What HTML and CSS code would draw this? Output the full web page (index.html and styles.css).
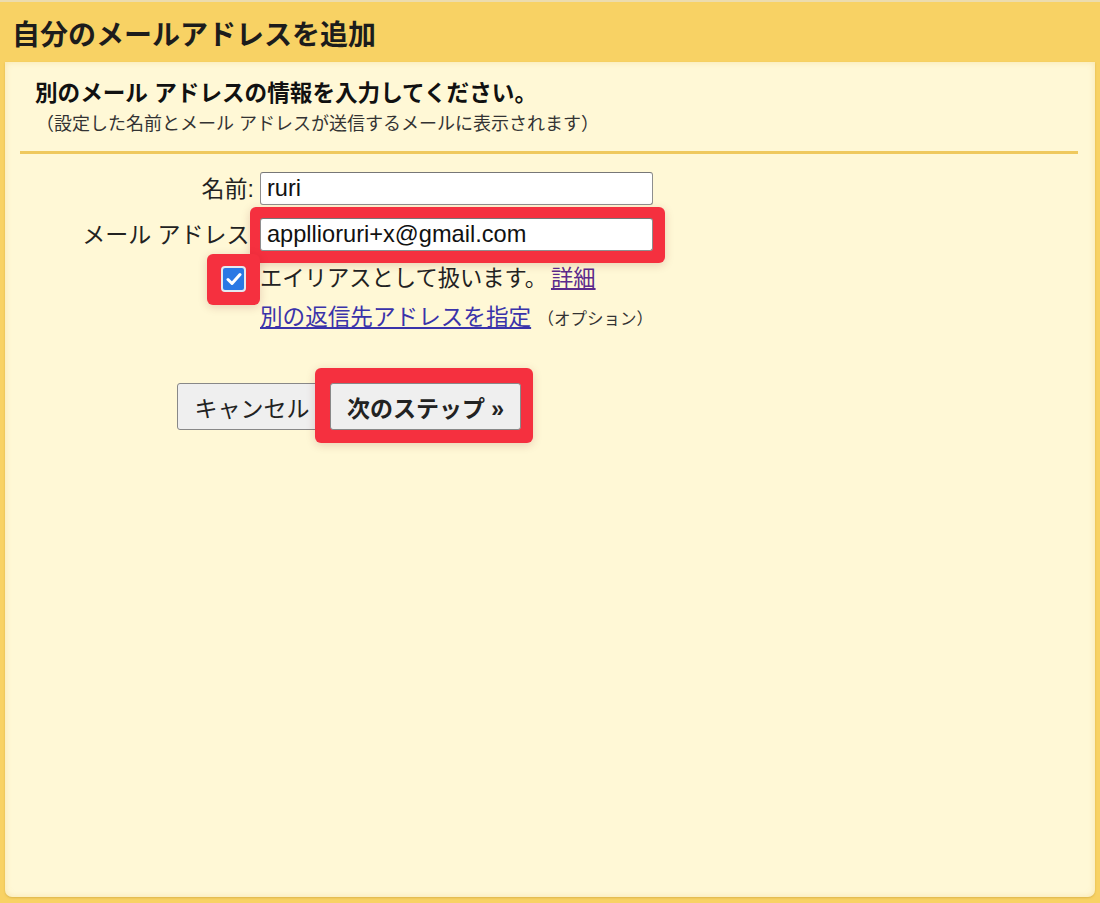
FILE: index.html
```html
<!DOCTYPE html>
<html lang="ja">
<head>
  <meta charset="UTF-8">
  <title>自分のメールアドレスを追加</title>
  <link rel="stylesheet" href="styles.css">
</head>
<body>
  <div class="header">
    <h1>自分のメールアドレスを追加</h1>
  </div>

  <div class="panel">
    <div class="intro">
      <div class="lead">別のメール アドレスの情報を入力してください。</div>
      <div class="note">（設定した名前とメール アドレスが送信するメールに表示されます）</div>
    </div>
    <div class="divider"></div>

    <div class="form">
      <label class="label" for="name">名前:</label>
      <input class="field" id="name" type="text" value="ruri">

      <label class="label under-mark" for="mail">メール アドレス:</label>
      <span class="mark mark-field">
        <input class="field" id="mail" type="text" value="appllioruri+x@gmail.com">
      </span>

      <span class="check-cell">
        <span class="mark mark-check">
          <span class="check">
            <svg width="16" height="14" viewBox="0 0 16 14"><path d="M2 7.5 L6 11.5 L14 2.5" fill="none" stroke="#fff" stroke-width="3" stroke-linecap="round" stroke-linejoin="round"/></svg>
          </span>
        </span>
      </span>
      <div class="text">エイリアスとして扱います。<a class="visited" href="#">詳細</a></div>

      <span class="spacer"></span>
      <div class="text reply"><a href="#">別の返信先アドレスを指定</a> <span class="option">（オプション）</span></div>
    </div>

    <div class="buttons">
      <button class="btn cancel" type="button">キャンセル</button>
      <span class="mark mark-btn">
        <button class="btn primary" type="button">次のステップ »</button>
      </span>
    </div>
  </div>
</body>
</html>
```

FILE: styles.css
```css
html, body {
  margin: 0;
  padding: 0;
}

body {
  background: #f8d264;
  border-top: 2px solid #ecdcae;
  font-family: 'Liberation Sans', 'Noto Sans CJK JP', sans-serif;
  color: #222;
  height: 901px;
  overflow: hidden;
}

.header {
  height: 60px;
  display: flex;
  align-items: center;
  padding: 7px 0 0 12px;
  box-sizing: border-box;
}

.header h1 {
  margin: 0;
  font-size: 28px;
  line-height: 36px;
  font-weight: 700;
  color: #1c1c1c;
}

.panel {
  margin: 0 5px;
  height: 835px;
  background: #fff8d6;
  border-radius: 0 0 7px 7px;
  box-shadow: inset 0 0 6px rgba(235, 195, 90, 0.35), 0 1px 2px rgba(180, 140, 40, 0.4);
  box-sizing: border-box;
  padding-top: 17px;
}

.intro {
  padding-left: 30px;
}

.lead {
  font-size: 22.6px;
  line-height: 30px;
  font-weight: 700;
  color: #111;
}

.note {
  margin-top: 2px;
  font-size: 18px;
  line-height: 26px;
  color: #333;
  padding-left: 1px;
}

.divider {
  margin: 14px 17px 0 15px;
  height: 3px;
  background: #efc95e;
}

.form {
  display: grid;
  grid-template-columns: 249px 393px;
  column-gap: 6px;
  row-gap: 13px;
  align-items: center;
  padding-top: 18px;
}

.label {
  text-align: right;
  font-size: 23px;
  line-height: 30px;
  color: #222;
  white-space: nowrap;
}

.label.under-mark {
  margin-right: -2px;
}

.field {
  display: block;
  width: 393px;
  height: 33px;
  box-sizing: border-box;
  border: 1px solid #8e8e8e;
  border-top-color: #777;
  border-radius: 3px;
  padding: 0 6px;
  margin: 0;
  font-family: 'Liberation Sans', 'Noto Sans CJK JP', sans-serif;
  font-size: 23.6px;
  color: #111;
  background: #fff;
}

/* red annotation boxes */
.mark {
  display: block;
  position: relative;
  z-index: 1;
  background: #f5303f;
  border-radius: 6px;
  box-shadow: 0 2px 10px rgba(120, 20, 30, 0.18);
}

.mark-field {
  padding: 11px 12px 12px 10px;
  margin: -11px -12px -12px -10px;
}

.mark-check {
  padding: 12px 14px 13px 14px;
  margin: -12px -14px -13px -14px;
}

.mark-btn {
  padding: 15px 12px 13px 15px;
  margin: -15px -12px -13px -15px;
}

.check-cell {
  display: flex;
  justify-content: flex-end;
  padding-right: 8px;
}

.check {
  width: 25px;
  height: 26px;
  box-sizing: border-box;
  border: 2px solid #e3e9f0;
  border-radius: 4px;
  background: #2a78e4;
  display: flex;
  align-items: center;
  justify-content: center;
}

.text {
  font-size: 22.3px;
  line-height: 30px;
  color: #222;
  white-space: nowrap;
}

.text a {
  margin-left: 4px;
}

.reply {
  margin-top: -4px;
  font-size: 22.6px;
}

.reply a {
  margin-left: 0;
}

a {
  color: #3a33aa;
  text-decoration: underline;
}

a.visited {
  color: #5b2a8c;
}

.option {
  font-size: 16.5px;
  color: #333;
}

.buttons {
  display: flex;
  gap: 3px;
  padding-left: 172px;
  margin-top: 49px;
}

.btn {
  display: block;
  height: 47px;
  box-sizing: border-box;
  padding: 0;
  margin: 0;
  border: 1px solid #888;
  border-radius: 3px;
  background: #efefef;
  font-family: 'Liberation Sans', 'Noto Sans CJK JP', sans-serif;
  font-size: 23px;
  color: #222;
}

.btn.cancel {
  width: 150px;
}

.btn.primary {
  font-weight: 700;
  width: 191px;
}
```
